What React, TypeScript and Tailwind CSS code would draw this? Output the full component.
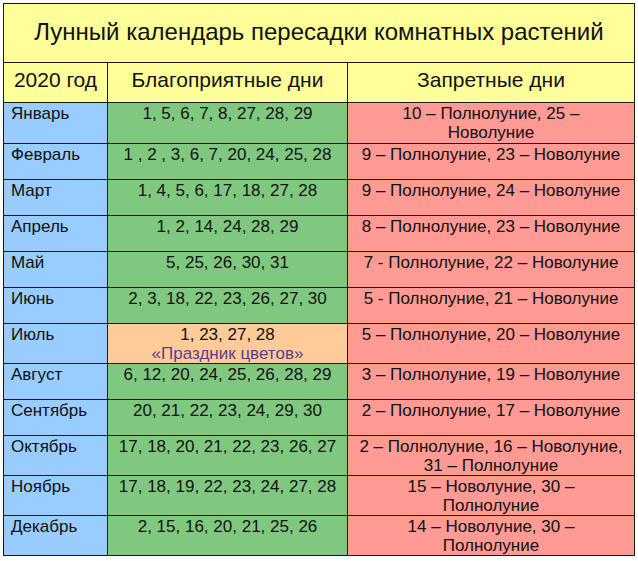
const rows = [
  { month: "Январь", good: "1, 5, 6, 7, 8, 27, 28, 29", bad: ["10 – Полнолуние, 25 –", "Новолуние"], h: "h-[40px]" },
  { month: "Февраль", good: "1 , 2 , 3, 6, 7, 20, 24, 25, 28", bad: ["9 – Полнолуние, 23 – Новолуние"], h: "h-[35px]" },
  { month: "Март", good: "1, 4, 5, 6, 17, 18, 27, 28", bad: ["9 – Полнолуние, 24 – Новолуние"], h: "h-[35px]" },
  { month: "Апрель", good: "1, 2, 14, 24, 28, 29", bad: ["8 – Полнолуние, 23 – Новолуние"], h: "h-[35px]" },
  { month: "Май", good: "5, 25, 26, 30, 31", bad: ["7 - Полнолуние, 22 – Новолуние"], h: "h-[35px]" },
  { month: "Июнь", good: "2, 3, 18, 22, 23, 26, 27, 30", bad: ["5 - Полнолуние, 21 – Новолуние"], h: "h-[35px]" },
  { month: "Июль", good: "1, 23, 27, 28", bad: ["5 – Полнолуние, 20 – Новолуние"], h: "h-[39px]", holiday: true },
  { month: "Август", good: "6, 12, 20, 24, 25, 26, 28, 29", bad: ["3 – Полнолуние, 19 – Новолуние"], h: "h-[35px]" },
  { month: "Сентябрь", good: "20, 21, 22, 23, 24, 29, 30", bad: ["2 – Полнолуние, 17 – Новолуние"], h: "h-[35px]" },
  { month: "Октябрь", good: "17, 18, 20, 21, 22, 23, 26, 27", bad: ["2 – Полнолуние, 16 – Новолуние,", "31 – Полнолуние"], h: "h-[39px]" },
  { month: "Ноябрь", good: "17, 18, 19, 22, 23, 24, 27, 28", bad: ["15 – Новолуние, 30 –", "Полнолуние"], h: "h-[39px]" },
  { month: "Декабрь", good: "2, 15, 16, 20, 21, 25, 26", bad: ["14 – Новолуние, 30 –", "Полнолуние"], h: "h-[39px]" },
]

export default function App() {
  return (
    <div className="w-[638px] h-[561px] bg-white pl-[3px] pt-[3px] font-['Liberation_Sans',Arial,sans-serif] text-[#111]">
      <div className="grid grid-cols-[103px_239px_286px] gap-px p-px bg-[#1a1a1a] w-fit">
        <div className="col-span-3 h-[58px] bg-[#ffff99] flex items-center justify-center text-[24px] pb-[2px]">
          Лунный календарь пересадки комнатных растений
        </div>

        <div className="h-[39px] bg-[#ffff99] flex justify-center pt-[1px] text-[21px]">2020 год</div>
        <div className="h-[39px] bg-[#ffff99] flex justify-center pt-[1px] text-[21px]">Благоприятные дни</div>
        <div className="h-[39px] bg-[#ffff99] flex justify-center pt-[1px] text-[21px]">Запретные дни</div>

        {rows.map((r) => (
          <div key={r.month} className="contents">
            <div className={`${r.h} bg-[#99ccff] pl-[7px] pt-[1px] text-[17px] leading-[19px]`}>{r.month}</div>
            <div
              className={`${r.h} ${r.holiday ? "bg-[#ffcc99]" : "bg-[#80c880]"} pt-[1px] text-center text-[17px] leading-[19px] whitespace-nowrap`}
            >
              {r.good}
              {r.holiday && <div className="text-[#5b3f8a]">«Праздник цветов»</div>}
            </div>
            <div className={`${r.h} bg-[#ff9b94] pt-[1px] text-center text-[17px] leading-[19px] whitespace-nowrap`}>
              {r.bad.map((line) => (
                <div key={line}>{line}</div>
              ))}
            </div>
          </div>
        ))}
      </div>
    </div>
  )
}
